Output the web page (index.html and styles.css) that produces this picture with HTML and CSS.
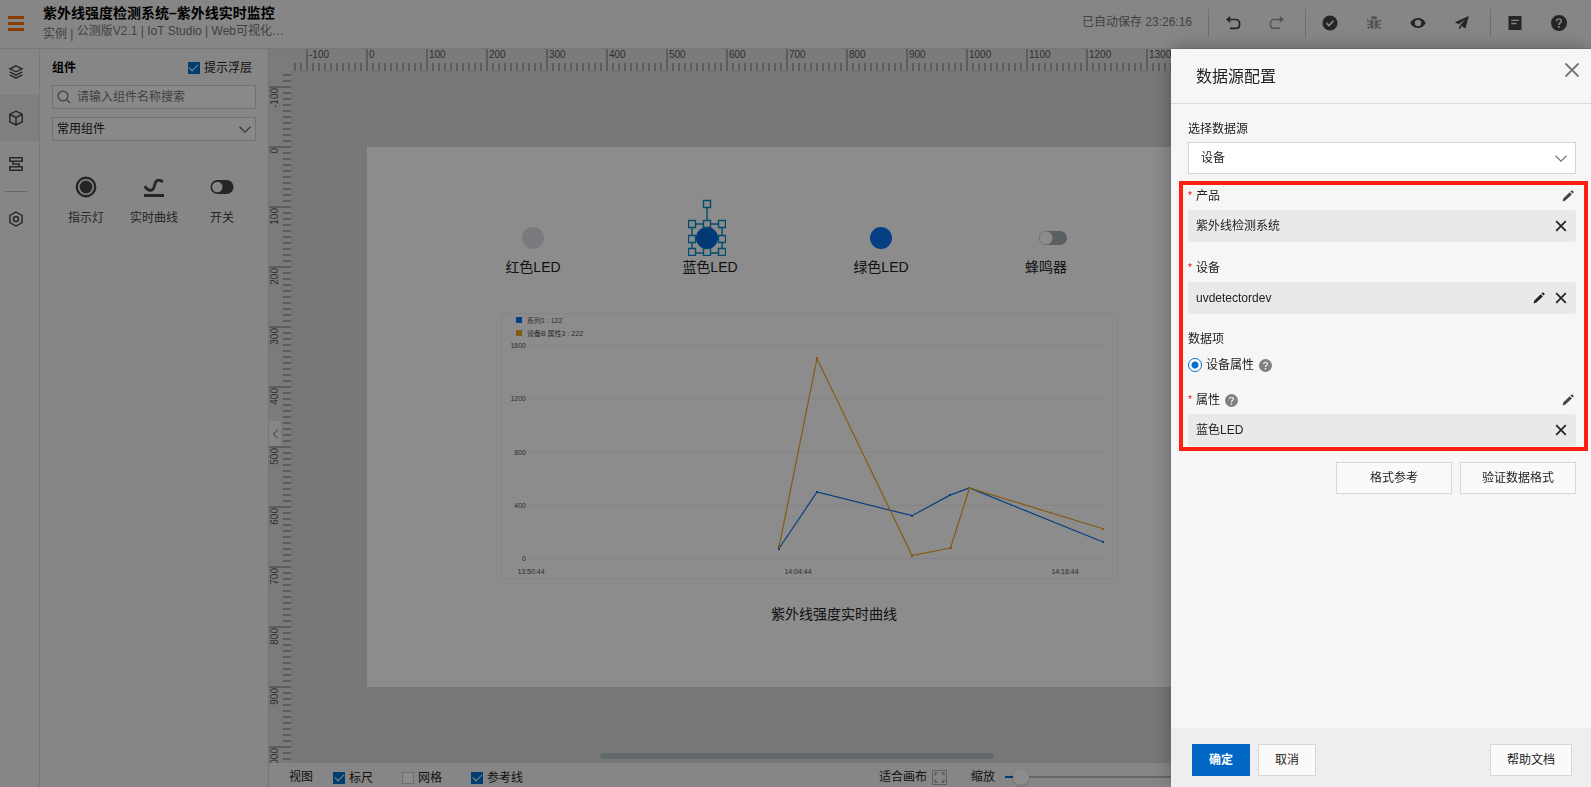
FILE: index.html
```html
<!DOCTYPE html>
<html lang="zh-CN">
<head>
<meta charset="utf-8">
<title>紫外线强度检测系统–紫外线实时监控</title>
<link rel="stylesheet" href="styles.css">
</head>
<body>
<svg class="defs" width="0" height="0" aria-hidden="true">
  <symbol id="pencil" viewBox="0 0 12 12"><path d="M0.6 11.4l.7-2.9 6.4-6.2 2.1 2.1-6.4 6.2zM8.4 1.6l1-.9c.4-.4.8-.4 1.2 0l.8.8c.4.4.4.8 0 1.200l-.9.9z"/></symbol>
  <symbol id="cross" viewBox="0 0 12 12"><path d="M1.200 1.200l9.600 9.600M10.800 1.200l-9.600 9.600" fill="none" stroke="currentColor" stroke-width="1.700"/></symbol>
  <symbol id="chevron" viewBox="0 0 12 7"><path d="M.5.7L6 6.100 11.500.7" fill="none" stroke="currentColor" stroke-width="1.300"/></symbol>
  <symbol id="help" viewBox="0 0 16 16"><path fill-rule="evenodd" d="M8 0a8 8 0 1 1 0 16A8 8 0 0 1 8 0zM5 6.300h1.500C6.500 5.300 7.100 4.600 8 4.600s1.500.6 1.500 1.400c0 .7-.4 1.100-1.100 1.600C7.500 8.200 7.200 8.800 7.200 9.900h1.500c0-.7.2-1 .9-1.500.9-.6 1.400-1.300 1.400-2.400 0-1.600-1.200-2.700-3-2.700S5 4.500 5 6.300zm2.100 4.800v1.700h1.700v-1.700z"/></symbol>
</svg>

<div class="app">
  <header class="topbar">
    <button class="menu" aria-label="菜单"><i></i><i></i><i></i></button>
    <div class="heading">
      <h1>紫外线强度检测系统–紫外线实时监控</h1>
      <p class="crumbs"><span>实例 |&nbsp;</span><span class="crumb-path">公测版V2.1 | IoT Studio | Web可视化…</span></p>
    </div>
    <div class="tools">
      <span class="saved">已自动保存 23:26:16</span>
      <i class="sep"></i>
      <button aria-label="撤销"><svg width="16" height="16" viewBox="0 0 16 16"><path d="M3 4.500h8a3.500 3.500 0 0 1 3.500 3.500v2.300a3 3 0 0 1-3 3H5" fill="none" stroke="currentColor" stroke-width="1.700"/><path d="M1 4.500L5.200 1v7z"/></svg></button>
      <button class="muted" aria-label="重做"><svg width="16" height="16" viewBox="0 0 16 16"><path d="M13 4.500H5A3.500 3.500 0 0 0 1.500 8v2.300a3 3 0 0 0 3 3H11" fill="none" stroke="currentColor" stroke-width="1.500"/><path d="M15 4.500L10.800 1v7z"/></svg></button>
      <i class="sep"></i>
      <button aria-label="检查"><svg width="16" height="16" viewBox="0 0 16 16"><circle cx="8" cy="8" r="7.600"/><path d="M4.600 8.200l2.400 2.300 4.500-4.700" fill="none" stroke="#f5f5f5" stroke-width="1.700"/></svg></button>
      <button class="muted" aria-label="调试"><svg width="16" height="16" viewBox="0 0 16 16"><path d="M5 4.200a3 3 0 0 1 6 0zM4.300 5.200h3.100V14C5.300 13.900 4 12.500 4 10zM8.600 5.200h3.100l.3 4.800c0 2.500-1.300 3.900-3.400 4z"/><path d="M5.500 1.500l1 1M10.500 1.500l-1 1M1.800 4.500v1.700h2.500M14.200 4.500v1.700h-2.500M1.200 9.300H4M14.800 9.300H12M2.200 14v-1.900h2.500M13.800 14v-1.900h-2.500" fill="none" stroke="currentColor" stroke-width="1.300"/></svg></button>
      <button aria-label="预览"><svg width="16" height="16" viewBox="0 0 16 16"><path fill-rule="evenodd" d="M.3 8C2 4.600 4.800 2.900 8 2.900S14 4.600 15.700 8C14 11.400 11.200 13.100 8 13.100S2 11.400.3 8zM8 4.800a3.200 3.200 0 1 0 0 6.400 3.200 3.200 0 0 0 0-6.400z"/></svg></button>
      <button aria-label="发布"><svg width="16" height="16" viewBox="0 0 16 16"><path d="M14.800 1L.9 7.300l3.700 1.900 7-5-5.700 6 5.600 3.200zM5.200 10.600v4.200l2.300-2.900z"/></svg></button>
      <i class="sep"></i>
      <button aria-label="文档"><svg width="16" height="16" viewBox="0 0 16 16"><path fill-rule="evenodd" d="M1.500 1h13v14h-13zM4.300 4.700v1.400h7.500V4.700zm0 3.100v1.400h5.200V7.800z"/></svg></button>
      <button aria-label="帮助"><svg width="16" height="16"><use href="#help"/></svg></button>
    </div>
  </header>

  <nav class="rail">
    <button aria-label="图层"><svg width="16" height="16" viewBox="0 0 16 16"><path d="M8 1.800l6 3-6 3-6-3zM1.700 7.900L8 11.100l6.300-3.200M1.700 10.900L8 14.100l6.300-3.200"/></svg></button>
    <button class="active" aria-label="组件"><svg width="16" height="16" viewBox="0 0 16 16"><path d="M8 1.200l6.200 3v7.600L8 14.900l-6.200-3.100V4.200zM2 4.500l6 3 6-3M8 7.500v7"/></svg></button>
    <button aria-label="页面"><svg width="16" height="16" viewBox="0 0 16 16"><path d="M1.800 1.800h12.400v3.500H1.800zM1.800 10.700h12.400v3.500H1.800zM4.800 5.300V8h6.400v2.700"/></svg></button>
    <i class="rail-sep"></i>
    <button aria-label="设置"><svg width="16" height="16" viewBox="0 0 16 16"><path d="M8 1l6.100 3.500v7L8 15l-6.100-3.500v-7z"/><circle cx="8" cy="8" r="2.500"/></svg></button>
  </nav>

  <aside class="panel">
    <div class="panel-head">
      <h2>组件</h2>
      <label class="check"><input type="checkbox" checked>提示浮层</label>
    </div>
    <div class="search">
      <svg width="14" height="14" viewBox="0 0 14 14"><circle cx="6" cy="6" r="4.900"/><path d="M9.600 9.600l3.400 3.400"/></svg>
      <input type="text" aria-label="搜索组件" placeholder="请输入组件名称搜索">
    </div>
    <div class="picker">
      <select aria-label="组件分类"><option>常用组件</option></select>
      <svg width="12" height="7"><use href="#chevron"/></svg>
    </div>
    <div class="widgets">
      <button><svg width="24" height="24" viewBox="0 0 24 24"><circle cx="12" cy="12" r="9.200" fill="none" stroke="currentColor" stroke-width="2.400"/><circle cx="12" cy="12" r="6.400"/></svg>指示灯</button>
      <button><svg width="24" height="24" viewBox="0 0 24 24"><path d="M2.800 11.200c2.200 3.600 4.800 4.700 7.200 3.700 3.400-1.500 1.700-8.200 5.500-9.600 2.300-.7 3.800.3 5.300 1.800" fill="none" stroke="currentColor" stroke-width="2.800"/><path d="M2 19h20v3H2z"/></svg>实时曲线</button>
      <button><svg width="24" height="24" viewBox="0 0 24 24"><rect x=".5" y="5" width="23" height="14" rx="7"/><circle cx="7.300" cy="12" r="5.200" fill="#f5f5f5"/></svg>开关</button>
    </div>
  </aside>

  <main class="editor">
    <div class="corner"></div>
    <div class="ruler ruler-x">
      <span>-100</span><span>0</span><span>100</span><span>200</span><span>300</span><span>400</span><span>500</span><span>600</span><span>700</span><span>800</span><span>900</span><span>1000</span><span>1100</span><span>1200</span><span>1300</span><span>1400</span><span>1500</span><span>1600</span><span>1700</span>
    </div>
    <div class="ruler ruler-y">
      <div><span>-100</span></div><div><span>0</span></div><div><span>100</span></div><div><span>200</span></div><div><span>300</span></div><div><span>400</span></div><div><span>500</span></div><div><span>600</span></div><div><span>700</span></div><div><span>800</span></div><div><span>900</span></div><div><span>1000</span></div>
      <button class="collapse" aria-label="收起"><svg width="7" height="10" viewBox="0 0 7 10"><path d="M5.700.8L1.300 5l4.400 4.200" fill="none" stroke="currentColor"/></svg></button>
    </div>
    <div class="stage">
      <div class="page">
        <div class="node red"><i class="led"></i>红色LED</div>
        <div class="node blue"><i class="led on"></i>蓝色LED</div>
        <div class="node green"><i class="led on"></i>绿色LED</div>
        <div class="node buzzer"><i class="toggle"></i>蜂鸣器</div>
        <svg class="selection" width="38" height="60" viewBox="0 0 38 60">
          <path d="M19 8v20M4 28h30v29H4z"/>
          <g><path d="M15.500 4.500h7v7h-7z"/><path d="M.5 24.500h7v7h-7zM15.500 24.500h7v7h-7zM30.500 24.500h7v7h-7zM.5 39.500h7v7h-7zM30.500 39.500h7v7h-7zM.5 52.500h7v7h-7zM15.500 52.500h7v7h-7zM30.500 52.500h7v7h-7z"/></g>
        </svg>
        <svg class="chart" width="617" height="267" viewBox="-1 0 617 267">
          <rect class="frame" x="-.5" y=".5" width="616" height="265"/>
          <path class="grid" d="M26 32.500h575M26 85.500h575M26 139.500h575M26 192.500h575M26 245.500h575"/>
          <rect x="14" y="4" width="6" height="6" fill="#0a73ee"/>
          <rect x="14" y="17" width="6" height="6" fill="#f0a423"/>
          <text x="25" y="10">系列1 : 122</text>
          <text x="25" y="23">设备B 属性3 : 222</text>
          <g text-anchor="end"><text x="24" y="35">1600</text><text x="24" y="88">1200</text><text x="24" y="142">800</text><text x="24" y="195">400</text><text x="24" y="248">0</text></g>
          <g text-anchor="middle"><text x="29" y="261">13:50:44</text><text x="296" y="261">14:04:44</text><text x="563" y="261">14:18:44</text></g>
          <g class="line" stroke="#0a73ee" fill="#0a73ee"><path fill="none" d="M277 235.500L315 179l95 23.700 38-20.600 19.500-7.100L601 229"/><path stroke="none" d="M276 234h2v3h-2zM314 178h2v2h-2zM409 202h2v2h-2zM447 181h2v2h-2zM600 228h2v2h-2z"/></g>
          <g class="line" stroke="#f0a423" fill="#f0a423"><path fill="none" d="M277 234L315 45.500 410 242.500l38.500-7.500L467.500 175 601 215.700"/><path stroke="none" d="M276 232h2v3h-2zM314 44h2v3h-2zM409 241h2v3h-2zM447 234h3v2h-3zM466 174h3v2h-3zM600 215h2v2h-2z"/></g>
        </svg>
        <p class="caption">紫外线强度实时曲线</p>
      </div>
      <i class="scroll"></i>
    </div>
    <div class="viewbar">
      <span class="view-title">视图</span>
      <label class="check"><input type="checkbox" checked>标尺</label>
      <label class="check"><input type="checkbox">网格</label>
      <label class="check"><input type="checkbox" checked>参考线</label>
      <button class="fit">适合画布<svg width="15" height="15" viewBox="0 0 15 15"><path d="M.5.500h14v14H.5z" stroke="#aaa"/><path d="M3 5.500V3h2.500M9.500 3H12v2.500M12 9.500V12H9.500M5.500 12H3V9.500"/></svg></button>
      <label class="zoom">缩放<input type="range" min="0" max="100" value="4"></label>
    </div>
  </main>
</div>

<div class="mask"></div>

<section class="drawer" role="dialog" aria-labelledby="drawer-title">
  <header class="drawer-head">
    <h2 id="drawer-title">数据源配置</h2>
    <button class="close" aria-label="关闭"><svg width="16" height="16" viewBox="0 0 16 16"><path d="M1.500 1.500l13 13M14.500 1.500l-13 13" fill="none" stroke="#777" stroke-width="1.800"/></svg></button>
  </header>
  <div class="drawer-body">
    <label class="field-label" for="source">选择数据源</label>
    <div class="source">
      <select id="source"><option>设备</option></select>
      <svg width="12" height="7"><use href="#chevron"/></svg>
    </div>
    <div class="field first">
      <div class="field-label"><b>*</b><span>产品</span><button class="edit" aria-label="编辑产品"><svg width="12" height="12"><use href="#pencil"/></svg></button></div>
      <div class="value"><span>紫外线检测系统</span><button aria-label="清除产品"><svg width="12" height="12"><use href="#cross"/></svg></button></div>
    </div>
    <div class="field">
      <div class="field-label"><b>*</b><span>设备</span></div>
      <div class="value"><span>uvdetectordev</span><button aria-label="编辑设备"><svg width="12" height="12"><use href="#pencil"/></svg></button><button aria-label="清除设备"><svg width="12" height="12"><use href="#cross"/></svg></button></div>
    </div>
    <div class="items">
      <div class="field-label">数据项</div>
      <div class="radio-row"><label><input type="radio" name="item" checked>设备属性</label><svg class="help" width="13" height="13"><use href="#help"/></svg></div>
    </div>
    <div class="field last">
      <div class="field-label"><b>*</b><span>属性</span><svg class="help" width="13" height="13"><use href="#help"/></svg><button class="edit" aria-label="编辑属性"><svg width="12" height="12"><use href="#pencil"/></svg></button></div>
      <div class="value"><span>蓝色LED</span><button aria-label="清除属性"><svg width="12" height="12"><use href="#cross"/></svg></button></div>
    </div>
    <div class="format"><button class="btn">格式参考</button><button class="btn">验证数据格式</button></div>
    <i class="highlight"></i>
  </div>
  <footer class="drawer-foot">
    <button class="btn primary">确定</button>
    <button class="btn">取消</button>
    <button class="btn docs">帮助文档</button>
  </footer>
</section>
</body>
</html>
```
FILE: styles.css
```css
* { box-sizing: border-box; }

body {
  margin: 0;
  height: 100vh;
  overflow: hidden;
  font: 12px/20px "Liberation Sans", "Noto Sans CJK SC", sans-serif;
  color: #222;
}

h1, h2, p { margin: 0; }

button {
  padding: 0;
  border: 0;
  background: none;
  font: inherit;
  color: inherit;
}

svg { display: block; flex: none; fill: currentColor; }
.defs { position: absolute; }

.app {
  display: grid;
  grid-template: 49px minmax(0, 1fr) / 40px 228px minmax(0, 1fr);
  height: 100%;
  background: #f5f5f5;
}

/* Top bar */
.topbar {
  grid-column: 1 / -1;
  display: flex;
  align-items: center;
  padding: 0 10px 2px 8px;
  border-bottom: 1px solid #d9d9d9;
}
.menu { display: grid; gap: 3px; width: 16px; margin-right: 19px; }
.menu i { height: 3px; background: #ff6a00; }
.heading { align-self: flex-start; padding-top: 3px; }
.heading h1 { font-size: 14px; line-height: 20px; color: #000; }
.crumbs { display: flex; align-items: flex-end; line-height: 16px; color: #777; }
.crumb-path { padding-bottom: 3px; }
.tools { display: flex; align-items: center; margin-left: auto; color: #444; }
.tools button { display: grid; place-items: center; width: 44px; height: 44px; }
.tools .muted { color: #999; }
.saved { margin-right: 10px; padding-bottom: 2px; color: #777; }
.sep { width: 1px; height: 28px; margin: 0 2px 0 6px; background: #c8c8c8; }

/* Icon rail */
.rail { border-right: 1px solid #dcdcdc; }
.rail button { display: grid; place-items: center; width: 100%; height: 46px; padding-right: 7px; color: #444; }
.rail .active { background: #e8e8e8; }
.rail svg { fill: none; stroke: currentColor; stroke-width: 1.4px; }
.rail-sep { display: block; width: 22px; height: 1px; margin: 4px 5px; background: #bbb; }

/* Component panel */
.panel { padding: 0 12px; }
.panel-head { display: flex; align-items: center; justify-content: space-between; height: 36px; padding: 1px 4px 0 0; }
.panel-head h2 { font-size: 12px; color: #000; }
.check { display: flex; align-items: center; gap: 4px; }
.check input {
  appearance: none;
  display: grid;
  place-items: center;
  width: 12px;
  height: 12px;
  margin: 0;
  border: 1px solid #ccc;
  background: #fff;
}
.check input:checked { border-color: #0070cc; background: #0070cc; }
.check input:checked::before {
  content: "";
  width: 8px;
  height: 4px;
  margin-bottom: 2px;
  border: solid #fff;
  border-width: 0 0 1px 1px;
  transform: rotate(-45deg);
}
.search, .picker { display: flex; align-items: center; height: 24px; border: 1px solid #d0d0d0; background: #fafafa; }
.search { padding: 0 4px; gap: 6px; }
.search svg { fill: none; stroke: #777; stroke-width: 1.3px; }
.search input { flex: 1; min-width: 0; padding: 0; border: 0; background: none; font: inherit; }
.search input::placeholder { color: #777; }
.picker { position: relative; margin-top: 8px; }
.picker select { width: 100%; height: 22px; padding: 0 4px; }
.picker svg { position: absolute; right: 4px; color: #666; }
select { appearance: none; border: 0; border-radius: 0; background: none; font: inherit; color: inherit; }
.widgets { display: grid; grid-template-columns: repeat(3, 1fr); margin-top: 34px; }
.widgets button { display: grid; justify-items: center; gap: 9px; color: #444; }

/* Editor with rulers */
.editor {
  display: grid;
  grid-template: 22px minmax(0, 1fr) 24px / 22px minmax(0, 1fr);
  border-left: 1px solid #d4d4d4;
  background: #d9d9d9;
}
.corner, .ruler { background-color: #e1e1e1; }
.ruler { overflow: hidden; display: flex; font-size: 10px; line-height: 12px; color: #555; }
.ruler-x {
  padding-left: 15px;
  background-image: linear-gradient(90deg, #aaa 2px, transparent 2px);
  background-repeat: repeat-x;
  background-size: 6px 8px;
  background-position: 3px 100%;
}
.ruler-x span { flex: 0 0 60px; padding-left: 1px; border-left: 2px solid #aaa; }
.ruler-y {
  position: relative;
  flex-direction: column;
  padding-top: 15px;
  background-image: linear-gradient(#aaa 2px, transparent 2px);
  background-repeat: repeat-y;
  background-size: 8px 6px;
  background-position: 100% 3px;
}
.ruler-y div { flex: 0 0 60px; border-top: 2px solid #aaa; }
.ruler-y span { display: block; width: 12px; writing-mode: vertical-rl; transform: rotate(180deg); }
.collapse {
  position: absolute;
  top: 350px;
  left: 0;
  display: grid;
  place-items: center;
  width: 12px;
  height: 25px;
  background: #f5f5f5;
}
.stage { position: relative; overflow: hidden; }
.page { position: absolute; left: 76px; top: 76px; width: 960px; height: 540px; background: #fff; }

/* Items placed freely on the canvas */
.node {
  position: absolute;
  top: 80px;
  display: flex;
  flex-direction: column;
  align-items: center;
  gap: 8px;
  width: 60px;
  font-size: 14px;
}
.red { left: 136px; }
.blue { left: 313px; }
.green { left: 484px; }
.buzzer { left: 649px; }
.led { width: 22px; height: 22px; border-radius: 50%; background: #dcdee4; }
.blue .led { background: #0068d8; margin-right: 6px; }
.green .led { background: #0a73ee; }
.toggle { width: 28px; height: 14px; margin: 4px 0 4px 14px; border-radius: 7px; background: radial-gradient(circle at 7px 7px, #fff 6px, #a4adb2 7px); }
.selection { position: absolute; left: 321px; top: 49px; fill: none; stroke: #078bcb; stroke-width: 1.4px; }
.selection g { fill: #fff; }
.chart { position: absolute; left: 134px; top: 166px; font-size: 7px; fill: #555; }
.frame { fill: none; stroke: #f3f3f3; }
.grid { fill: none; stroke: #f1f1f1; }
.line { stroke-width: 1.2px; }
.caption { position: absolute; top: 457px; left: 404px; font-size: 14px; white-space: nowrap; }
.scroll { position: absolute; left: 309px; bottom: 4px; width: 394px; height: 6px; border-radius: 3px; background: #b5c2c8; }

/* View bar */
.viewbar { grid-column: 1 / -1; display: flex; align-items: center; padding: 4px 0 0 20px; background: #f5f5f5; white-space: nowrap; overflow: hidden; }
.viewbar .check { margin-right: 29px; padding-top: 1px; }
.view-title { margin-right: 20px; }
.fit { display: flex; align-items: center; gap: 5px; margin-left: 327px; }
.fit svg { fill: none; stroke: #777; }
.zoom { display: flex; align-items: center; gap: 10px; margin-left: 24px; }
.zoom input { appearance: none; width: 216px; height: 16px; margin: 0; background: linear-gradient(90deg, #0070cc 4%, #bbb 4%) center / 100% 2px no-repeat; }
.zoom input::-webkit-slider-thumb { appearance: none; width: 16px; height: 16px; border-radius: 50%; background: #fff; box-shadow: 0 1px 3px rgba(0, 0, 0, .2); }

.mask { position: fixed; inset: 0; background: rgba(0, 0, 0, .45); }

/* Drawer */
.drawer {
  position: fixed;
  top: 49px;
  right: 0;
  bottom: 0;
  display: flex;
  flex-direction: column;
  width: 420px;
  background: #f6f6f6;
  box-shadow: 0 0 20px rgba(0, 0, 0, .3);
}
.drawer-head { display: flex; justify-content: space-between; height: 55px; padding: 13px 11px 0 25px; border-bottom: 1px solid #dadada; }
.drawer-head h2 { font-size: 16px; font-weight: 400; line-height: 30px; }
.close { align-self: flex-start; }
.drawer-body { position: relative; flex: 1; padding: 15px 15px 0 17px; }
.field-label { display: flex; align-items: center; height: 20px; margin-bottom: 4px; color: #222; }
.drawer-body > .field-label { margin-bottom: 3px; }
.field-label b { width: 8px; font-size: 10px; font-weight: 400; color: #f00; }
.source { position: relative; display: flex; align-items: center; height: 32px; border: 1px solid #d4d4d4; background: #fff; }
.source select { width: 100%; height: 30px; padding: 0 12px; }
.source svg { position: absolute; right: 8px; color: #777; }
.field { margin-top: 16px; }
.field.first { margin-top: 12px; }
.edit { margin: 0 2px 0 auto; color: #444; }
.value { display: flex; align-items: center; gap: 10px; height: 32px; padding: 0 9px 0 8px; border-radius: 3px; background: #e9e9e9; }
.value span { margin-right: auto; }
.help { margin-left: 5px; fill: #808080; }
.items { margin-top: 15px; }
.items .field-label { margin-bottom: 3px; }
.radio-row { display: flex; align-items: center; height: 26px; }
.field.last { margin-top: 12px; }
.radio-row label { display: flex; align-items: center; gap: 4px; }
.radio-row input {
  appearance: none;
  width: 14px;
  height: 14px;
  margin: 0;
  border: 1px solid #0070cc;
  border-radius: 50%;
  background: radial-gradient(circle, #0070cc 3px, #fff 4px);
}
.format { display: flex; justify-content: flex-end; gap: 8px; margin-top: 16px; }
.btn { height: 32px; padding: 0 16px; border: 1px solid #d8d8d8; background: #fafafa; }
.format .btn { width: 116px; }
.highlight { position: absolute; top: 77px; left: 8px; right: 3px; height: 270px; border: 4px solid #ff2010; pointer-events: none; }
.drawer-foot { display: flex; gap: 8px; padding: 16px 19px 11px 21px; background: #eee; }
.primary { border-color: #0068c4; background: #0068c4; color: #fff; font-weight: 700; }
.docs { margin-left: auto; }
```
